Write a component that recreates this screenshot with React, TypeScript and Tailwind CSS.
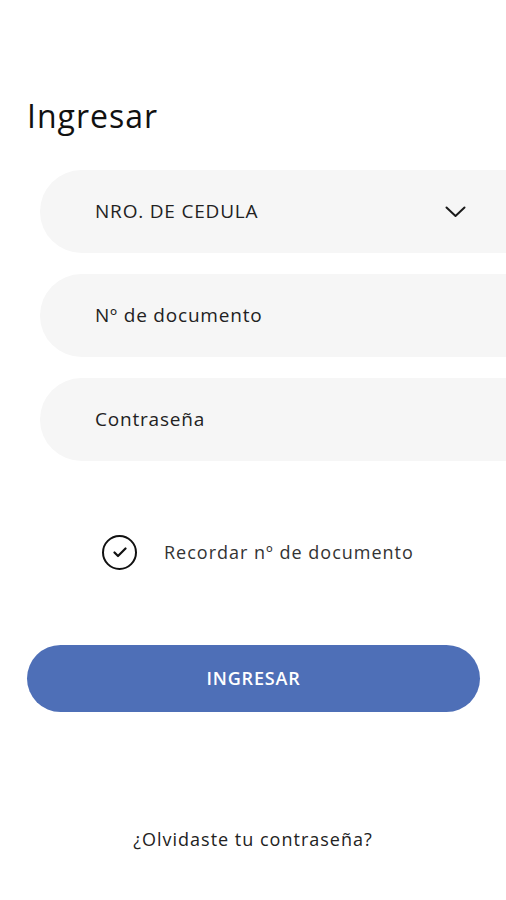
const Field = ({ label, chevron }: { label: string; chevron?: boolean }) => (
  <div className="flex h-[83px] w-[480px] items-center rounded-l-full bg-[#f6f6f6] pl-[55px]">
    <span className="flex-1 text-[19px] tracking-[0.8px] text-[#222]">{label}</span>
    {chevron && (
      <svg className="mr-[54px]" width="21" height="12" viewBox="0 0 21 12" fill="none">
        <path d="M1.5 1.5 L10.5 10 L19.5 1.5" stroke="#1a1a1a" strokeWidth="2" strokeLinecap="round" strokeLinejoin="round" />
      </svg>
    )}
  </div>
);

export default function App() {
  return (
    <div
      className="min-h-[900px] overflow-x-hidden bg-white text-[#222]"
      style={{ fontFamily: "'Open Sans', 'Liberation Sans', sans-serif" }}
    >
      <h1 className="pl-[27px] pt-[94px] text-[32px] leading-[44px] tracking-[1px] font-normal text-[#111]">
        Ingresar
      </h1>

      <div className="ml-[40px] mt-[32px] flex flex-col gap-[21px]">
        <Field label="NRO. DE CEDULA" chevron />
        <Field label="Nº de documento" />
        <Field label="Contraseña" />
      </div>

      <div className="mt-[74px] flex items-center pl-[102px]">
        <div className="flex h-[35px] w-[35px] items-center justify-center rounded-full border-2 border-[#111]">
          <svg width="14" height="11" viewBox="0 0 14 11" fill="none">
            <path d="M1.5 5.5 L5 9 L12.5 1.5" stroke="#111" strokeWidth="2.2" strokeLinecap="round" strokeLinejoin="round" />
          </svg>
        </div>
        <span className="ml-[27px] text-[18px] tracking-[1px] text-[#333]">Recordar nº de documento</span>
      </div>

      <div className="mt-[75px] px-[27px]">
        <button className="flex h-[67px] w-[453px] items-center justify-center rounded-full bg-[#4e6fb7] text-[18px] font-semibold tracking-[0.8px] text-white">
          INGRESAR
        </button>
      </div>

      <div className="mt-[114px] text-center">
        <span className="text-[18px] tracking-[1px] text-[#222]">¿Olvidaste tu contraseña?</span>
      </div>
    </div>
  );
}
